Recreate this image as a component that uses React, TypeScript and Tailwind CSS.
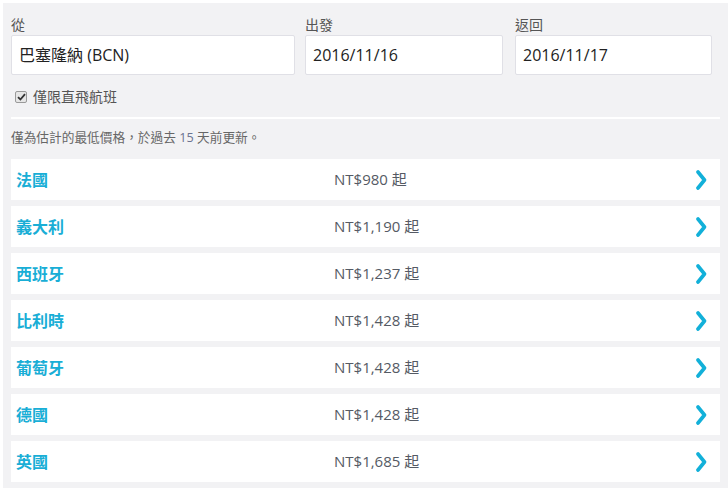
import { useState } from "react";

const FONT = { fontFamily: '"Open Sans", "Noto Sans CJK TC", sans-serif' };

const RESULTS = [
  { country: "法國", price: "NT$980" },
  { country: "義大利", price: "NT$1,190" },
  { country: "西班牙", price: "NT$1,237" },
  { country: "比利時", price: "NT$1,428" },
  { country: "葡萄牙", price: "NT$1,428" },
  { country: "德國", price: "NT$1,428" },
  { country: "英國", price: "NT$1,685" },
];

export default function App() {
  const [direct, setDirect] = useState(true);

  return (
    <div className="min-h-screen bg-white pl-[3px] pt-[3px]" style={FONT}>
      <div className="bg-[#f2f2f4] pl-[8px] pr-[8px] pt-[11px] pb-[10px]">
        {/* Search fields */}
        <div className="flex">
          <Field label="從" value="巴塞隆納 (BCN)" width="w-[284px]" />
          <Field label="出發" value="2016/11/16" width="w-[198px] ml-[10px]" />
          <Field label="返回" value="2016/11/17" width="w-[197px] ml-[12px]" />
        </div>

        <label className="mt-[12px] flex h-[20px] items-center pl-[4px] text-[14px] text-[#555] cursor-pointer">
          <span
            onClick={() => setDirect(!direct)}
            className="flex h-[12px] w-[12px] items-center justify-center rounded-[2px] border border-[#9a9a9a] bg-[#e6e6e6]"
          >
            {direct && (
              <svg width="9" height="8" viewBox="0 0 9 8">
                <path d="M1 4.2 L3.4 6.5 L8 1.2" fill="none" stroke="#333" strokeWidth="1.8" />
              </svg>
            )}
          </span>
          <span className="ml-[6px] leading-[20px]">僅限直飛航班</span>
        </label>

        <div className="mt-[10px] h-[2px] bg-white" />

        <p className="mt-[10px] text-[12.7px] leading-[16px] text-[#666]">
          僅為估計的最低價格，於過去 <span className="text-[#6a7390]">15</span> 天前更新。
        </p>

        {/* Destination list */}
        <div className="mt-[14px] flex flex-col gap-[6px]">
          {RESULTS.map((r) => (
            <div key={r.country} className="flex h-[41px] items-center bg-white pl-[5px] pr-[13px] cursor-pointer">
              <span className="w-[318px] text-[16px] font-semibold text-[#19aed6]">{r.country}</span>
              <span className="flex-1 text-[15px] text-[#555a64]">{r.price} 起</span>
              <svg width="11" height="20" viewBox="0 0 11 20">
                <path d="M2 2 L8.5 10 L2 18" fill="none" stroke="#12b0d9" strokeWidth="3.6" strokeLinecap="round" strokeLinejoin="round" />
              </svg>
            </div>
          ))}
        </div>
      </div>
    </div>
  );
}

function Field({ label, value, width }: { label: string; value: string; width: string }) {
  return (
    <div className={width}>
      <div className="h-[21px] text-[14px] leading-[21px] text-[#555]">{label}</div>
      <div className="flex h-[40px] items-center rounded-[2px] border border-[#e0e0e6] bg-white px-[7px] text-[16px] text-[#222]">
        {value}
      </div>
    </div>
  );
}
